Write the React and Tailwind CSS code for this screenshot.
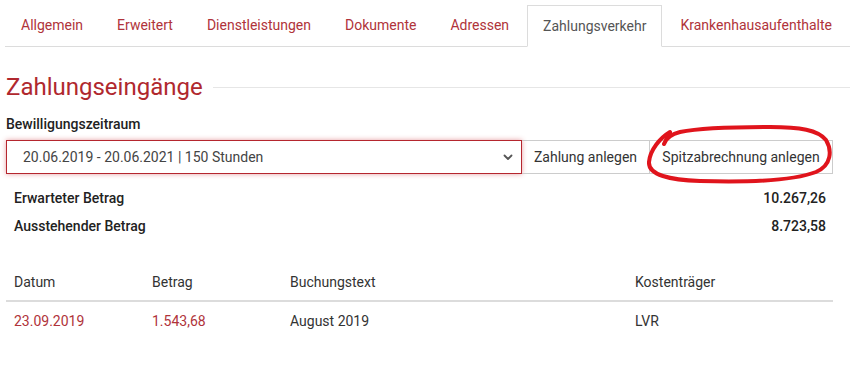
import React from "react";

const tabs = ["Allgemein", "Erweitert", "Dienstleistungen", "Dokumente", "Adressen", "Zahlungsverkehr", "Krankenhausaufenthalte"];

export default function App() {
  return (
    <div className="w-[850px] h-[366px] bg-white overflow-hidden relative text-[14px] text-[#333]" style={{ fontFamily: "Roboto, 'Noto Sans', sans-serif" }}>
      <div className="pt-[5px] pl-[5px]">
        <div className="flex border-b border-[#dcdcdc] h-[42px]">
          {tabs.map((t) => {
            const active = t === "Zahlungsverkehr";
            return (
              <div
                key={t}
                className={
                  active
                    ? "px-[15px] mr-[2px] flex items-center whitespace-nowrap border border-[#dcdcdc] border-b-white -mb-px bg-white text-[#555]"
                    : "px-[15px] mr-[2px] flex items-center whitespace-nowrap border border-transparent text-[#b0333a]"
                }
              >
                {t}
              </div>
            );
          })}
        </div>
      </div>

      <div className="pl-[6px] pr-[17px]">
        <div className="flex items-center mt-[25px] h-[30px]">
          <div className="text-[24px] text-[#b0282e] leading-none">Zahlungseingänge</div>
          <div className="flex-1 h-px bg-[#e6e6e6] ml-[10px] mr-[-17px]"></div>
        </div>

        <div className="mt-[13px] font-medium text-[#222] leading-[18px]">Bewilligungszeitraum</div>

        <div className="flex mt-[7px] h-[34px]">
          <div className="w-[516px] shrink-0 border border-[#b5262e] shadow-[0_0_5px_rgba(200,40,50,0.45)] flex items-center pl-[16px] pr-[8px] text-[#444]">
            <span className="flex-1 whitespace-nowrap">20.06.2019 - 20.06.2021 | 150 Stunden</span>
            <svg width="10" height="7" viewBox="0 0 10 7" fill="none">
              <path d="M1.5 1.5 L5 5 L8.5 1.5" stroke="#555" strokeWidth="1.8" strokeLinecap="round" strokeLinejoin="round" />
            </svg>
          </div>
          <div className="w-[128px] shrink-0 whitespace-nowrap border border-l-0 border-[#ccc] flex items-center justify-center text-[#333]">Zahlung anlegen</div>
          <div className="w-[183px] shrink-0 whitespace-nowrap border border-l-0 border-[#ccc] flex items-center justify-center text-[#333]">Spitzabrechnung anlegen</div>
        </div>

        <div className="pl-[8px] pr-[7px] mt-[10px] font-medium text-[#222]">
          <div className="flex justify-between h-[28px] items-center">
            <span>Erwarteter Betrag</span>
            <span>10.267,26</span>
          </div>
          <div className="flex justify-between h-[28px] items-center">
            <span>Ausstehender Betrag</span>
            <span>8.723,58</span>
          </div>
        </div>

        <div className="mt-[24px] w-[827px]">
          <div className="flex h-[38px] items-center border-b-2 border-[#dcdcdc] text-[#333]">
            <div className="w-[138px] pl-[8px]">Datum</div>
            <div className="w-[138px] pl-[8px]">Betrag</div>
            <div className="w-[345px] pl-[8px]">Buchungstext</div>
            <div className="flex-1 pl-[8px]">Kostenträger</div>
          </div>
          <div className="flex h-[38px] items-center">
            <div className="w-[138px] pl-[8px] text-[#b0333a]">23.09.2019</div>
            <div className="w-[138px] pl-[8px] text-[#b0333a]">1.543,68</div>
            <div className="w-[345px] pl-[8px] text-[#333]">August 2019</div>
            <div className="flex-1 pl-[8px] text-[#333]">LVR</div>
          </div>
        </div>
      </div>

      <svg className="absolute left-[640px] top-[120px] pointer-events-none" width="200" height="70" viewBox="0 0 200 70" fill="none">
        <path
          d="M30 12 C20 18 10 30 9 42 C8 55 30 60 60 61 C95 62 150 62 176 52 C192 45 192 30 186 20 C178 10 160 7 130 7 C100 7 60 8 40 12 C32 14 26 18 24 24"
          stroke="#e0141c"
          strokeWidth="4"
          strokeLinecap="round"
          strokeLinejoin="round"
        />
      </svg>
    </div>
  );
}
